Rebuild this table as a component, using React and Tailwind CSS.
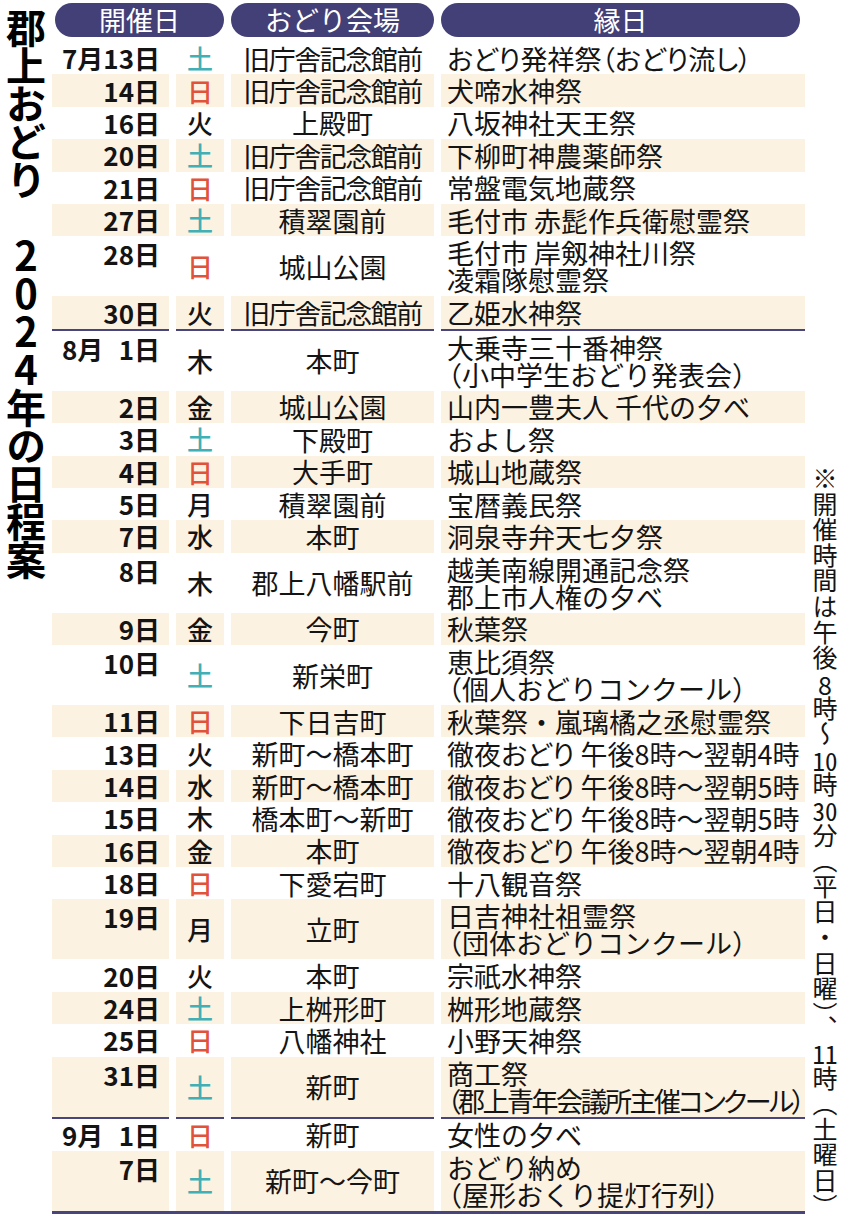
import React from "react";

const rows = [
  { m: "7月", d: "13", w: "土", v: "旧庁舎記念館前", e: ["おどり発祥祭（おどり流し）"] },
  { d: "14", w: "日", v: "旧庁舎記念館前", e: ["犬啼水神祭"] },
  { d: "16", w: "火", v: "上殿町", e: ["八坂神社天王祭"] },
  { d: "20", w: "土", v: "旧庁舎記念館前", e: ["下柳町神農薬師祭"] },
  { d: "21", w: "日", v: "旧庁舎記念館前", e: ["常盤電気地蔵祭"] },
  { d: "27", w: "土", v: "積翠園前", e: ["毛付市 赤髭作兵衛慰霊祭"] },
  { d: "28", w: "日", v: "城山公園", e: ["毛付市 岸剱神社川祭", "凌霜隊慰霊祭"] },
  { d: "30", w: "火", v: "旧庁舎記念館前", e: ["乙姫水神祭"], end: true },
  { m: "8月", pad: true, d: "1", w: "木", v: "本町", e: ["大乗寺三十番神祭", "（小中学生おどり発表会）"] },
  { d: "2", w: "金", v: "城山公園", e: ["山内一豊夫人 千代の夕べ"] },
  { d: "3", w: "土", v: "下殿町", e: ["およし祭"] },
  { d: "4", w: "日", v: "大手町", e: ["城山地蔵祭"] },
  { d: "5", w: "月", v: "積翠園前", e: ["宝暦義民祭"] },
  { d: "7", w: "水", v: "本町", e: ["洞泉寺弁天七夕祭"] },
  { d: "8", w: "木", v: "郡上八幡駅前", e: ["越美南線開通記念祭", "郡上市人権の夕べ"] },
  { d: "9", w: "金", v: "今町", e: ["秋葉祭"] },
  { d: "10", w: "土", v: "新栄町", e: ["恵比須祭", "（個人おどりコンクール）"] },
  { d: "11", w: "日", v: "下日吉町", e: ["秋葉祭・嵐璃橘之丞慰霊祭"] },
  { d: "13", w: "火", v: "新町～橋本町", e: ["徹夜おどり 午後8時～翌朝4時"] },
  { d: "14", w: "水", v: "新町～橋本町", e: ["徹夜おどり 午後8時～翌朝5時"] },
  { d: "15", w: "木", v: "橋本町～新町", e: ["徹夜おどり 午後8時～翌朝5時"] },
  { d: "16", w: "金", v: "本町", e: ["徹夜おどり 午後8時～翌朝4時"] },
  { d: "18", w: "日", v: "下愛宕町", e: ["十八観音祭"] },
  { d: "19", w: "月", v: "立町", e: ["日吉神社祖霊祭", "（団体おどりコンクール）"] },
  { d: "20", w: "火", v: "本町", e: ["宗祇水神祭"] },
  { d: "24", w: "土", v: "上桝形町", e: ["桝形地蔵祭"] },
  { d: "25", w: "日", v: "八幡神社", e: ["小野天神祭"] },
  { d: "31", w: "土", v: "新町", e: ["商工祭", "（郡上青年会議所主催コンクール）"], end: true, tight: true },
  { m: "9月", pad: true, d: "1", w: "日", v: "新町", e: ["女性の夕べ"] },
  { d: "7", w: "土", v: "新町～今町", e: ["おどり納め", "（屋形おくり提灯行列）"] },
];

const cols = "grid grid-cols-[117px_48px_203px_364px] gap-x-[7px]";

function lineClass(r, k, line) {
  if (r.tight && k === 1) return "tracking-[-2.5px] [font-feature-settings:'palt']";
  if (line.length >= 13) return "[font-feature-settings:'palt']";
  if (line.startsWith("（")) return "-ml-[12px]";
  return "";
}

function Row({ r, i }) {
  const bg = i % 2 === 1 ? "bg-[#fcf2e2]" : "bg-white";
  const tall = r.e.length > 1;
  const dayColor =
    r.w === "土" ? "text-[#3fb0b5]" : r.w === "日" ? "text-[#e1523a]" : "text-[#141414]";

  return (
    <div className={`${cols} ${tall ? "h-[60px]" : "h-[32.4px]"}`}>
      <div
        className={`${bg} flex justify-end pr-[9px] text-[26px] font-bold leading-[28px] text-[#141414] ${
          tall ? "items-start pt-[4px]" : "items-center"
        }`}
      >
        {r.m && <span>{r.m}</span>}
        {r.pad && <span className="invisible">0</span>}
        <span>{r.d}日</span>
      </div>
      <div className={`${bg} flex items-center justify-center text-[26px] font-medium leading-none ${dayColor}`}>
        {r.w}
      </div>
      <div
        className={`${bg} flex items-center justify-center whitespace-nowrap text-[27px] leading-none text-[#141414] ${
          r.v.length >= 7 ? "tracking-[-1.5px]" : ""
        }`}
      >
        {r.v}
      </div>
      <div className={`${bg} flex flex-col justify-center whitespace-nowrap pl-[6px] text-[27px] leading-[27px] text-[#141414]`}>
        {r.e.map((line, k) => (
          <span key={k} className={lineClass(r, k, line)}>
            {line}
          </span>
        ))}
      </div>
    </div>
  );
}

function Separator() {
  return (
    <div className={`${cols} h-[2px]`}>
      <div className="bg-[#48457c]" />
      <div className="bg-[#48457c]" />
      <div className="bg-[#48457c]" />
      <div className="bg-[#48457c]" />
    </div>
  );
}

export default function App() {
  return (
    <div className="w-[844px] h-[1220px] bg-white font-['Noto_Sans_CJK_JP','Noto_Sans',sans-serif] text-[#141414]">
      <div className="flex">
        {/* title */}
        <div className="w-[52px] shrink-0 flex justify-center pt-[8px]">
          <div className="[writing-mode:vertical-rl] [text-orientation:upright] text-[40px] font-bold leading-none tracking-[-2px] text-black">
            郡上おどり　2024年の日程案
          </div>
        </div>

        {/* table */}
        <div className="w-[753px] shrink-0">
          <div className={`${cols} mt-[3px] h-[34px] mb-[5px] text-[27px] leading-[34px] text-white`}>
            <div className="col-span-2 ml-[3px] rounded-full bg-[#433f77] text-center">開催日</div>
            <div className="rounded-full bg-[#433f77] text-center">おどり会場</div>
            <div className="mr-[5px] rounded-full bg-[#433f77] text-center">縁日</div>
          </div>
          {rows.map((r, i) => (
            <React.Fragment key={i}>
              <Row r={r} i={i} />
              {r.end && <Separator />}
            </React.Fragment>
          ))}
          <div className="h-[3px] bg-[#48457c]" />
        </div>

        {/* note */}
        <div className="flex-1 self-end -mb-[5px] flex justify-center">
          <div className="[writing-mode:vertical-rl] text-[25px] leading-none tracking-[0.6px] text-[#141414]">
            ※開催時間は午後<span className="[text-combine-upright:all]">8</span>時～
            <span className="[text-combine-upright:all]">10</span>時
            <span className="[text-combine-upright:all]">30</span>分（平日・日曜）、
            <span className="[text-combine-upright:all]">11</span>時（土曜日）
          </div>
        </div>
      </div>
    </div>
  );
}
